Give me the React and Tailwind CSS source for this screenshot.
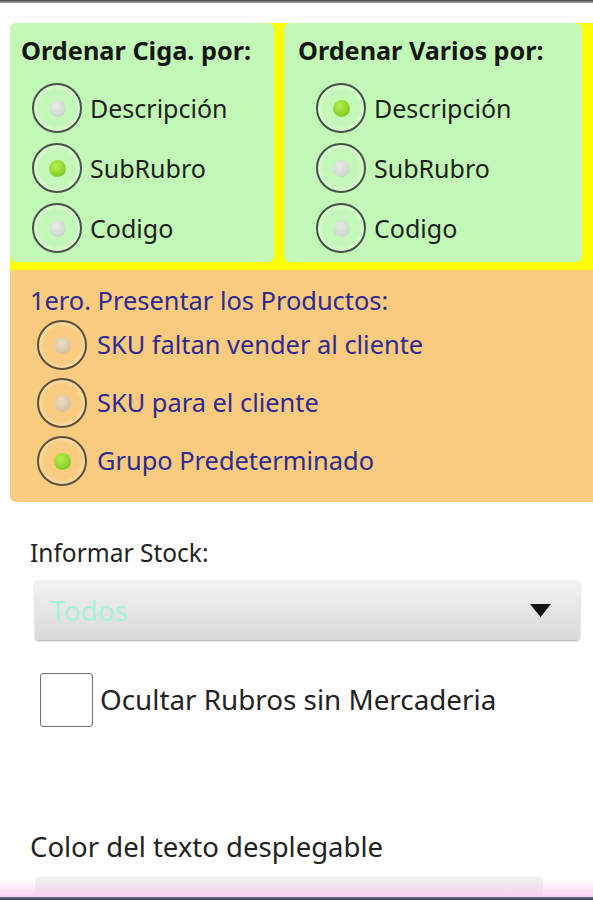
import React from "react";

function Radio({ checked, tone = "green" }) {
  const ring =
    tone === "green"
      ? "border-[#4a4f4a] bg-[radial-gradient(circle,#c4f8b8_0%,#c4f8b8_55%,#e6fde0_80%,#c4f8b8_100%)]"
      : "border-[#5a5040] bg-[radial-gradient(circle,#f9cb7e_0%,#f9cb7e_55%,#fde4b8_80%,#f9cb7e_100%)]";
  const off =
    tone === "green"
      ? "bg-[radial-gradient(circle_at_40%_35%,#e6ece6,#c2cfc2)]"
      : "bg-[radial-gradient(circle_at_40%_35%,#ecdcc0,#cfb998)]";
  return (
    <div
      className={`w-[50px] h-[50px] shrink-0 rounded-full border-2 flex items-center justify-center ${ring}`}
    >
      <div
        className={`w-[17px] h-[17px] rounded-full ${
          checked
            ? "bg-[radial-gradient(circle_at_40%_35%,#b8f050,#6cbf10)]"
            : off
        }`}
      />
    </div>
  );
}

function GreenRow({ label, checked, pl }) {
  return (
    <div className={`h-[60px] flex items-center ${pl}`}>
      <Radio checked={checked} />
      <span className="ml-[8px] text-[25px] text-[#1c1f1c] leading-none">{label}</span>
    </div>
  );
}

function OrangeRow({ label, checked }) {
  return (
    <div className="h-[58px] flex items-center pl-[27px]">
      <Radio checked={checked} tone="orange" />
      <span className="ml-[10px] text-[25.4px] text-[#2e2a94] leading-none">{label}</span>
    </div>
  );
}

export default function App() {
  return (
    <div className="w-[593px] h-[900px] bg-white relative overflow-hidden font-['Noto_Sans',sans-serif]">
      <div className="h-[3px] bg-gradient-to-b from-[#4a4a4a] to-[#b0b0b0]" />
      <div className="pt-[20px] pl-[10px]">
        <div className="flex bg-[#ffff00] pb-[8px] rounded-tl-[6px]">
          <div className="w-[264px] h-[239px] rounded-[6px] bg-[#c2f9b6]">
            <div className="h-[55px] flex items-center pl-[11px]">
              <span className="text-[25.3px] font-bold text-[#141614]">Ordenar Ciga. por:</span>
            </div>
            <GreenRow label="Descripción" pl="pl-[22px]" />
            <GreenRow label="SubRubro" checked pl="pl-[22px]" />
            <GreenRow label="Codigo" pl="pl-[22px]" />
          </div>
          <div className="w-[10px]" />
          <div className="w-[298px] h-[239px] rounded-[6px] bg-[#c2f9b6]">
            <div className="h-[55px] flex items-center pl-[14px]">
              <span className="text-[25.2px] font-bold text-[#141614]">Ordenar Varios por:</span>
            </div>
            <GreenRow label="Descripción" checked pl="pl-[32px]" />
            <GreenRow label="SubRubro" pl="pl-[32px]" />
            <GreenRow label="Codigo" pl="pl-[32px]" />
          </div>
        </div>
        <div className="h-[232px] bg-[#f9cb7e] rounded-bl-[6px] pt-[14px]">
          <div className="h-[32px] flex items-center pl-[20px]">
            <span className="text-[25.4px] text-[#2e2a94]">1ero. Presentar los Productos:</span>
          </div>
          <OrangeRow label="SKU faltan vender al cliente" />
          <OrangeRow label="SKU para el cliente" />
          <OrangeRow label="Grupo Predeterminado" checked />
        </div>
      </div>

      <div className="pl-[30px] pt-[36px] text-[24.5px] text-[#222] leading-[30px]">Informar Stock:</div>

      <div className="mt-[12px] ml-[35px] w-[545px] h-[60px] rounded-[4px] bg-gradient-to-b from-[#f4f3f4] to-[#d9d8d9] shadow-[0_1px_2px_rgba(0,0,0,0.35)] flex items-center justify-between pl-[15px] pr-[29px]">
        <span className="text-[28px] text-[#a6f3da]">Todos</span>
        <svg width="21" height="13" viewBox="0 0 21 13">
          <polygon points="0,0 21,0 10.5,13" fill="#111" />
        </svg>
      </div>

      <div className="mt-[33px] ml-[40px] flex items-center">
        <div className="w-[53px] h-[54px] bg-white border-[1.5px] border-[#777] rounded-[3px] shadow-[inset_0_0_2px_rgba(0,0,0,0.15)]" />
        <span className="ml-[7px] text-[27.8px] text-[#222]">Ocultar Rubros sin Mercaderia</span>
      </div>

      <div className="mt-[100px] pl-[30px] text-[27.5px] text-[#222] leading-[40px]">
        Color del texto desplegable
      </div>

      <div className="mt-[10px] ml-[35px] w-[508px] h-[40px] rounded-[4px] bg-gradient-to-b from-[#f2f1f2] to-[#dcdcdc]" />

      <div className="absolute left-0 right-0 bottom-[3px] h-[18px] bg-gradient-to-b from-[rgba(250,220,245,0)] to-[#f7d3f3]" />
      <div className="absolute left-0 right-0 bottom-0 h-[3px] bg-gradient-to-b from-[#6a6f88] to-[#3c4058]" />
    </div>
  );
}
